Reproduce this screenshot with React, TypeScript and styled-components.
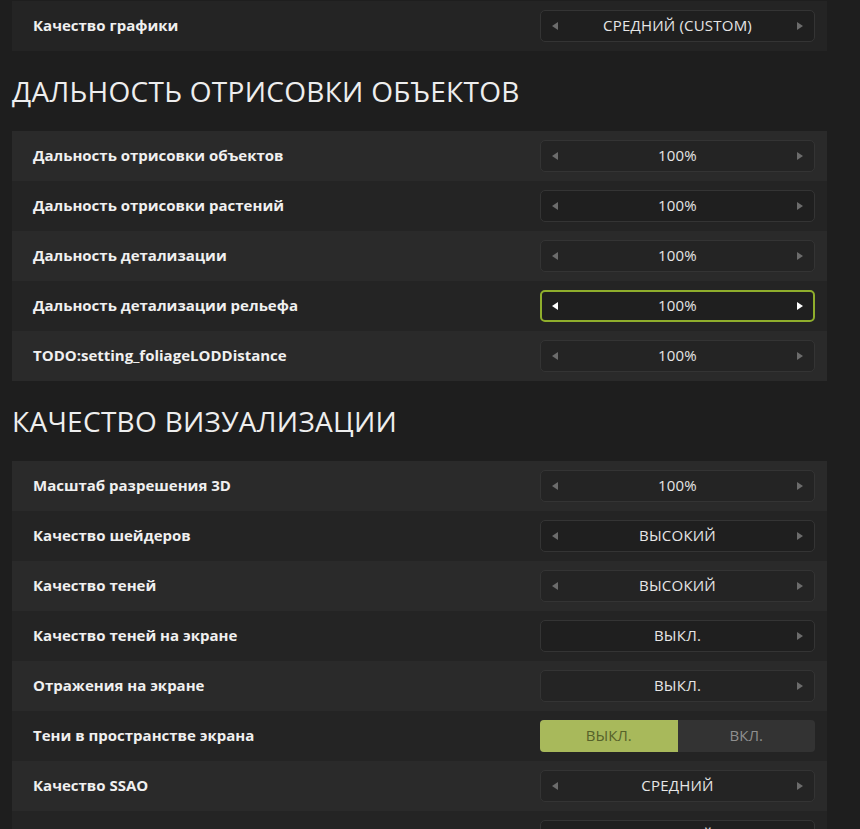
import React from 'react'
import styled, { createGlobalStyle } from 'styled-components'

const GlobalStyle = createGlobalStyle`
  html, body {
    margin: 0;
    padding: 0;
    background: #1e1e1e;
    height: 829px;
    overflow: hidden;
  }
  body {
    font-family: 'Open Sans', 'Noto Sans', sans-serif;
    color: #ececec;
  }
`

type Setting =
  | { kind: 'select'; label: string; value: string; atStart?: boolean; focused?: boolean }
  | { kind: 'toggle'; label: string; on: boolean }

interface Section {
  title?: string
  items: Setting[]
}

const sections: Section[] = [
  {
    items: [{ kind: 'select', label: 'Качество графики', value: 'СРЕДНИЙ (CUSTOM)' }]
  },
  {
    title: 'ДАЛЬНОСТЬ ОТРИСОВКИ ОБЪЕКТОВ',
    items: [
      { kind: 'select', label: 'Дальность отрисовки объектов', value: '100%' },
      { kind: 'select', label: 'Дальность отрисовки растений', value: '100%' },
      { kind: 'select', label: 'Дальность детализации', value: '100%' },
      { kind: 'select', label: 'Дальность детализации рельефа', value: '100%', focused: true },
      { kind: 'select', label: 'TODO:setting_foliageLODDistance', value: '100%' }
    ]
  },
  {
    title: 'КАЧЕСТВО ВИЗУАЛИЗАЦИИ',
    items: [
      { kind: 'select', label: 'Масштаб разрешения 3D', value: '100%' },
      { kind: 'select', label: 'Качество шейдеров', value: 'ВЫСОКИЙ' },
      { kind: 'select', label: 'Качество теней', value: 'ВЫСОКИЙ' },
      { kind: 'select', label: 'Качество теней на экране', value: 'ВЫКЛ.', atStart: true },
      { kind: 'select', label: 'Отражения на экране', value: 'ВЫКЛ.', atStart: true },
      { kind: 'toggle', label: 'Тени в пространстве экрана', on: false },
      { kind: 'select', label: 'Качество SSAO', value: 'СРЕДНИЙ' },
      { kind: 'select', label: 'Качество освещения', value: 'СРЕДНИЙ' }
    ]
  }
]

const Page = styled.div`
  width: 860px;
  padding-top: 1px;
`

const Heading = styled.h2`
  margin: 0;
  height: 80px;
  display: flex;
  align-items: center;
  padding-left: 12px;
  padding-bottom: 1px;
  box-sizing: border-box;
  font-size: 28px;
  font-weight: 400;
  color: #eeeeee;
  letter-spacing: 0.3px;
`

const List = styled.div`
  margin: 0 33px 0 12px;
`

const Row = styled.div<{ $light: boolean }>`
  height: 50px;
  display: flex;
  align-items: center;
  justify-content: space-between;
  padding: 0 12px 0 21px;
  background: ${(p) => (p.$light ? '#2a2a2a' : '#242424')};
`

const Label = styled.span`
  padding-bottom: 2px;
  font-size: 15px;
  font-weight: 700;
  color: #f0f0f0;
`

const Selector = styled.div<{ $focused: boolean }>`
  width: 275px;
  height: 32px;
  box-sizing: border-box;
  display: flex;
  align-items: center;
  justify-content: space-between;
  padding: 0 ${(p) => (p.$focused ? 10 : 11)}px;
  border-radius: 5px;
  border: ${(p) => (p.$focused ? '2px solid #8fae2c' : '1px solid #343434')};
  background: ${(p) => (p.$focused ? '#1f1f1f' : 'rgba(0, 0, 0, 0.12)')};
`

const Value = styled.span`
  flex: 1;
  padding-bottom: 2px;
  text-align: center;
  font-size: 15px;
  color: #e6e6e6;
  letter-spacing: 0.2px;
`

const Arrow = styled.span<{ $dir: 'left' | 'right'; $bright: boolean; $hidden?: boolean }>`
  width: 0;
  height: 0;
  border-top: 4px solid transparent;
  border-bottom: 4px solid transparent;
  ${(p) =>
    p.$dir === 'left'
      ? `border-right: 6px solid ${p.$bright ? '#ffffff' : '#6c6c6c'};`
      : `border-left: 6px solid ${p.$bright ? '#ffffff' : '#6c6c6c'};`}
  visibility: ${(p) => (p.$hidden ? 'hidden' : 'visible')};
`

const Toggle = styled.div`
  width: 275px;
  height: 32px;
  display: flex;
  border-radius: 4px;
  overflow: hidden;
  background: #333333;
`

const ToggleHalf = styled.span<{ $active: boolean }>`
  flex: 1;
  display: flex;
  align-items: center;
  justify-content: center;
  padding-bottom: 2px;
  font-size: 15px;
  background: ${(p) => (p.$active ? '#a8b95b' : 'transparent')};
  color: ${(p) => (p.$active ? '#56622a' : '#8f8f8f')};
`

const SettingRow: React.FC<{ item: Setting; light: boolean }> = ({ item, light }) => (
  <Row $light={light}>
    <Label>{item.label}</Label>
    {item.kind === 'select' ? (
      <Selector $focused={!!item.focused}>
        <Arrow $dir="left" $bright={!!item.focused} $hidden={item.atStart} />
        <Value>{item.value}</Value>
        <Arrow $dir="right" $bright={!!item.focused} />
      </Selector>
    ) : (
      <Toggle>
        <ToggleHalf $active={!item.on}>ВЫКЛ.</ToggleHalf>
        <ToggleHalf $active={item.on}>ВКЛ.</ToggleHalf>
      </Toggle>
    )}
  </Row>
)

const App: React.FC = () => (
  <Page>
    <GlobalStyle />
    {sections.map((section, si) => (
      <React.Fragment key={si}>
        {section.title && <Heading>{section.title}</Heading>}
        <List>
          {section.items.map((item, i) => (
            <SettingRow key={item.label} item={item} light={si === 0 ? false : i % 2 === 0} />
          ))}
        </List>
      </React.Fragment>
    ))}
  </Page>
)

export default App
